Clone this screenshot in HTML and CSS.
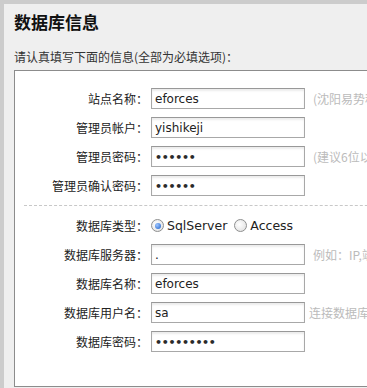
FILE: index.html
```html
<!DOCTYPE html>
<html lang="zh-CN">
<head>
  <meta charset="UTF-8" />
  <title>数据库信息</title>
  <link rel="stylesheet" href="styles.css">
</head>
<body>
  <div class="panel">
    <h2>数据库信息</h2>
    <p class="intro">请认真填写下面的信息(全部为必填选项)：</p>

    <div class="form-box">
      <div class="rows">
        <label>站点名称：</label>
        <input type="text" value="eforces" />
        <span class="hint">(沈阳易势科技有限公司)</span>

        <label>管理员帐户：</label>
        <input type="text" value="yishikeji" />
        <span class="hint"></span>

        <label>管理员密码：</label>
        <input type="password" value="123456" />
        <span class="hint">(建议6位以上)</span>

        <label>管理员确认密码：</label>
        <input type="password" value="123456" />
        <span class="hint"></span>
      </div>

      <div class="divider"></div>

      <div class="rows">
        <label>数据库类型：</label>
        <div class="radios">
          <label class="radio"><input type="radio" name="dbtype" checked /> SqlServer</label>
          <label class="radio"><input type="radio" name="dbtype" /> Access</label>
        </div>
        <span class="hint"></span>

        <label>数据库服务器：</label>
        <input type="text" value="." />
        <span class="hint">例如：IP,端口</span>

        <label>数据库名称：</label>
        <input type="text" value="eforces" />
        <span class="hint"></span>

        <label>数据库用户名：</label>
        <input type="text" value="sa" />
        <span class="hint tight">连接数据库的用户名</span>

        <label>数据库密码：</label>
        <input type="password" value="123456789" />
        <span class="hint"></span>
      </div>
    </div>
  </div>
</body>
</html>
```

FILE: styles.css
```css
html, body {
  margin: 0;
  padding: 0;
  overflow: hidden;
}

body {
  background: #cccccc;
  font-family: "DejaVu Sans", "Noto Sans CJK SC", sans-serif;
  font-size: 12px;
  color: #333;
}

.panel {
  margin: 4px 0 0 4px;
  padding: 6px 0 0 10px;
  background: #efefef;
  height: 400px;
}

h2 {
  margin: 0;
  font-family: "Noto Sans CJK SC", sans-serif;
  font-size: 17px;
  line-height: 24px;
  font-weight: bold;
  color: #111;
}

.intro {
  margin: 13px 0 3px;
  line-height: 20px;
  font-family: "Noto Sans CJK SC", sans-serif;
  color: #333;
}

.form-box {
  width: 420px;
  height: 317px;
  background: #fff;
  border: 1px solid #8c8c8c;
  padding-top: 17px;
  box-sizing: border-box;
}

.rows {
  display: grid;
  grid-template-columns: 133px 154px 1fr;
  column-gap: 3px;
  row-gap: 8px;
  align-items: center;
}

.rows > label {
  text-align: right;
  font-family: "Noto Sans CJK SC", sans-serif;
  color: #222;
  white-space: nowrap;
}

.rows input[type="text"],
.rows input[type="password"] {
  height: 21px;
  width: 154px;
  box-sizing: border-box;
  margin: 0;
  padding: 1px 3px 0;
  border: 1px solid #a8a8a8;
  border-top-color: #989898;
  box-shadow: inset 0 2px 2px rgba(0, 0, 0, 0.08);
  font-family: "DejaVu Sans", sans-serif;
  font-size: 12px;
  color: #222;
  outline: none;
}

.rows input[type="password"] {
  font-size: 11px;
  font-weight: bold;
  letter-spacing: -0.3px;
  color: #2a2a2a;
}

.hint {
  margin-left: 5px;
  color: #bbb;
  font-family: "Noto Sans CJK SC", sans-serif;
  white-space: nowrap;
}

.hint.tight {
  margin-left: 1px;
}

.divider {
  margin: 9px 0 9px 9px;
  border-top: 1px dashed #c8c8c8;
}

.radios {
  display: flex;
  gap: 7px;
  height: 21px;
  align-items: center;
  white-space: nowrap;
}

.radio {
  display: flex;
  align-items: center;
  gap: 3px;
  font-size: 12.5px;
  color: #222;
}

.radio input {
  appearance: none;
  -webkit-appearance: none;
  width: 13px;
  height: 13px;
  margin: 0;
  border-radius: 50%;
  border: 1px solid #8e8f8f;
  background: radial-gradient(circle at 40% 40%, #fff, #dcdcdc);
  position: relative;
  box-sizing: border-box;
}

.radio input:checked::after {
  content: "";
  position: absolute;
  left: 2.5px;
  top: 2.5px;
  width: 6px;
  height: 6px;
  border-radius: 50%;
  background: radial-gradient(circle at 35% 35%, #9fc6ff, #1a5fc8);
}
```
